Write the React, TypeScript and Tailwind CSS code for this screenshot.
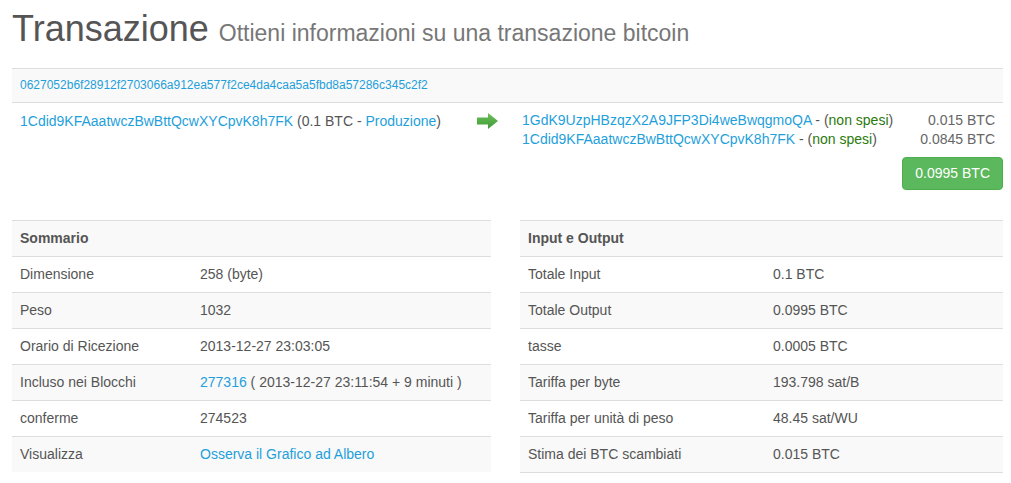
import React from "react";

const link = "text-[#1f9fdb]";

function Arrow() {
  return (
    <svg width="21" height="16" viewBox="0 0 21 16">
      <defs>
        <linearGradient id="ag" x1="0" y1="0" x2="0" y2="1">
          <stop offset="0" stopColor="#6cc05a" />
          <stop offset="1" stopColor="#3f9a36" />
        </linearGradient>
      </defs>
      <path d="M0 4.5 H11 V0 L21 8 L11 16 V11.5 H0 Z" fill="url(#ag)" />
    </svg>
  );
}

type Row = { label: string; value: React.ReactNode };

function InfoTable({ title, rows, labelW, className }: { title: string; rows: Row[]; labelW: string; className: string }) {
  return (
    <div className={className}>
      <div className="h-[36px] border-t border-[#ddd] bg-[#f9f9f9] flex items-center px-2 font-bold text-[#555]">
        {title}
      </div>
      {rows.map((r, i) => (
        <div
          key={r.label}
          className={
            "h-[36px] border-t border-[#ddd] flex items-center " +
            (i % 2 === 1 ? "bg-[#f9f9f9]" : "bg-white")
          }
        >
          <div className={labelW + " pl-2"}>{r.label}</div>
          <div className="flex-1 pl-2">{r.value}</div>
        </div>
      ))}
    </div>
  );
}

export default function App() {
  const left: Row[] = [
    { label: "Dimensione", value: "258 (byte)" },
    { label: "Peso", value: "1032" },
    { label: "Orario di Ricezione", value: "2013-12-27 23:03:05" },
    {
      label: "Incluso nei Blocchi",
      value: (
        <span>
          <span className={link}>277316</span> ( 2013-12-27 23:11:54 + 9 minuti )
        </span>
      ),
    },
    { label: "conferme", value: "274523" },
    { label: "Visualizza", value: <span className={link}>Osserva il Grafico ad Albero</span> },
  ];
  const right: Row[] = [
    { label: "Totale Input", value: "0.1 BTC" },
    { label: "Totale Output", value: "0.0995 BTC" },
    { label: "tasse", value: "0.0005 BTC" },
    { label: "Tariffa per byte", value: "193.798 sat/B" },
    { label: "Tariffa per unità di peso", value: "48.45 sat/WU" },
    { label: "Stima dei BTC scambiati", value: "0.015 BTC" },
  ];

  return (
    <div className="min-h-screen bg-white font-['Liberation_Sans',Arial,sans-serif] text-[14px] leading-5 text-[#555] pl-[12px] pr-[8px] pt-[9px]">
      <h1 className="text-[36px] leading-[1.1] text-[#555] font-normal">
        Transazione <small className="text-[23px] text-[#777]">Ottieni informazioni su una transazione bitcoin</small>
      </h1>

      <div className="mt-[19px] h-[35px] border-y border-[#ddd] bg-[#f9f9f9] flex items-center px-2 text-[12px]">
        <span className={link}>0627052b6f28912f2703066a912ea577f2ce4da4caa5a5fbd8a57286c345c2f2</span>
      </div>

      <div className="flex pt-2">
        <div className="w-[455px] pl-2">
          <span className={link}>1Cdid9KFAaatwczBwBttQcwXYCpvK8h7FK</span> (0.1 BTC -{" "}
          <span className={link}>Produzione</span>)
        </div>
        <div className="w-[52px] pl-[10px] pt-[2px]">
          <Arrow />
        </div>
        <div className="flex-1 pl-[3px]">
          <div className="flex justify-between pr-2 leading-[19px]">
            <span>
              <span className={link}>1GdK9UzpHBzqzX2A9JFP3Di4weBwqgmoQA</span> - (
              <span className="text-[#2a7a0c]">non spesi</span>)
            </span>
            <span className="text-[#666]">0.015 BTC</span>
          </div>
          <div className="flex justify-between pr-2 leading-[19px]">
            <span>
              <span className={link}>1Cdid9KFAaatwczBwBttQcwXYCpvK8h7FK</span> - (
              <span className="text-[#2a7a0c]">non spesi</span>)
            </span>
            <span className="text-[#666]">0.0845 BTC</span>
          </div>
          <div className="flex justify-end mt-[8px]">
            <button className="bg-[#5cb85c] text-white rounded px-3 py-[6px] leading-[19px] border border-[#4cae4c]">
              0.0995 BTC
            </button>
          </div>
        </div>
      </div>

      <div className="flex gap-[29px] mt-[30px]">
        <InfoTable title="Sommario" rows={left} labelW="w-[180px]" className="w-[479px]" />
        <InfoTable title="Input e Output" rows={right} labelW="w-[245px]" className="flex-1 border-b border-[#ddd]" />
      </div>
    </div>
  );
}
